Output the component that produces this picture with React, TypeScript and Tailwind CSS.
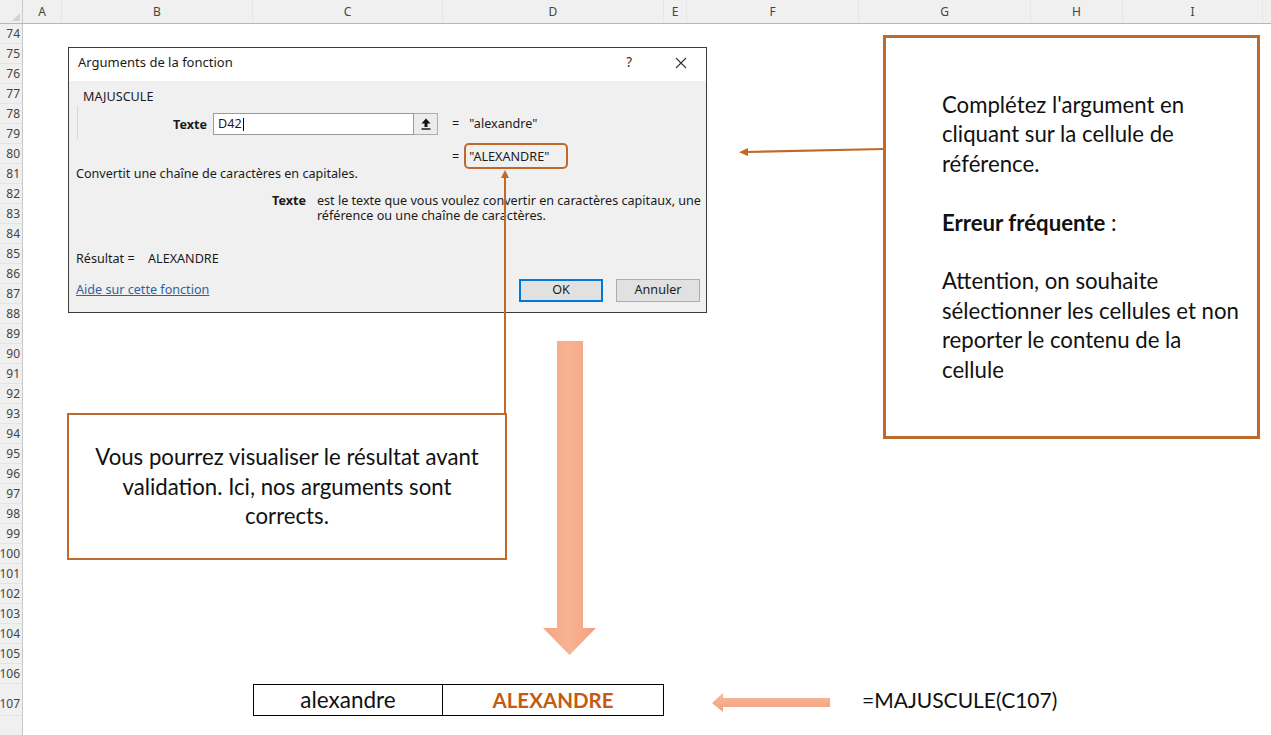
import React from "react";

const cols: { label: string; w: number }[] = [
  { label: "A", w: 39 },
  { label: "B", w: 191 },
  { label: "C", w: 190 },
  { label: "D", w: 221 },
  { label: "E", w: 23 },
  { label: "F", w: 172 },
  { label: "G", w: 172 },
  { label: "H", w: 92 },
  { label: "I", w: 140 },
];

const rows = Array.from({ length: 33 }, (_, i) => 74 + i);

function Dialog() {
  return (
    <div className="absolute left-[68px] top-[47px] w-[639px] h-[266px] border border-[#3c3c3c] bg-[#f0f0f0] text-[12.6px] text-[#1a1a1a] font-['Segoe_UI','Noto_Sans',sans-serif] flex flex-col">
      <div className="h-[33px] bg-white flex items-start pt-[6px] pl-[9px] pr-[19px] shrink-0">
        <span className="text-[13px] leading-[17px]">Arguments de la fonction</span>
        <span className="ml-auto text-[13.5px] leading-[17px] text-[#333]">?</span>
        <svg className="ml-[43px] mt-[3px]" width="12" height="12" viewBox="0 0 12 12">
          <path d="M1 1 L11 11 M11 1 L1 11" stroke="#333" strokeWidth="1.1" />
        </svg>
      </div>
      <div className="pl-[14px] mt-[8px] leading-[15px]">MAJUSCULE</div>
      <div className="ml-[8px] mt-[2px] border-l border-[#d8d8d8] pt-[7px] pb-[4px] flex items-center">
        <div className="w-[129px] text-right font-bold leading-[15px]">Texte</div>
        <div className="ml-[6px] w-[201px] h-[22px] bg-white border border-[#9a9a9a] flex items-center pl-[4px]">
          D42<span className="w-px h-[13px] bg-black ml-[1px]" />
        </div>
        <div className="w-[24px] h-[22px] bg-[#ececec] border border-[#adadad] border-l-0 flex items-center justify-center">
          <svg width="10" height="12" viewBox="0 0 10 12">
            <path d="M5 0.5 L9.5 5.5 L6.5 5.5 L6.5 9 L3.5 9 L3.5 5.5 L0.5 5.5 Z" fill="#111" />
            <rect x="0.5" y="10.3" width="9" height="1.4" fill="#111" />
          </svg>
        </div>
        <span className="ml-[14px]">=</span>
        <span className="ml-[10px]">"alexandre"</span>
      </div>
      <div className="mt-[10px] pl-[383px] leading-[15px] flex">
        <span>=</span>
        <span className="ml-[10px]">"ALEXANDRE"</span>
      </div>
      <div className="mt-[2px] pl-[7px] leading-[16px]">Convertit une chaîne de caractères en capitales.</div>
      <div className="mt-[11px] pl-[203px] flex leading-[15px]">
        <span className="font-bold">Texte</span>
        <span className="ml-[11px]">
          est le texte que vous voulez convertir en caractères capitaux, une
          <br />
          référence ou une chaîne de caractères.
        </span>
      </div>
      <div className="mt-[28px] pl-[7px] flex leading-[15px]">
        <span className="w-[72px]">Résultat =</span>
        <span>ALEXANDRE</span>
      </div>
      <div className="mt-[13px] pl-[7px] pr-[6px] flex items-center">
        <span className="text-[#2f6399] underline">Aide sur cette fonction</span>
        <div className="ml-auto w-[84px] h-[23px] bg-[#e1e1e1] border-2 border-[#0078d7] flex items-center justify-center">
          OK
        </div>
        <div className="ml-[13px] w-[84px] h-[23px] bg-[#e1e1e1] border border-[#adadad] flex items-center justify-center">
          Annuler
        </div>
      </div>
    </div>
  );
}

export default function App() {
  return (
    <div className="relative w-[1271px] h-[735px] overflow-hidden bg-white font-['Lato','Noto_Sans',sans-serif]">
      {/* Column header */}
      <div className="flex h-[24px] bg-[#f0f0f0] border-b border-[#b8b8b8] font-['Segoe_UI','Noto_Sans',sans-serif] text-[12px] text-[#444]">
        <div className="w-[23px] shrink-0 border-r border-[#c8c8c8] relative flex items-end justify-end pr-[2px] pb-[2px]">
          <svg width="8" height="8" viewBox="0 0 8 8">
            <path d="M8 0 L8 8 L0 8 Z" fill="#d2d2d2" />
          </svg>
        </div>
        {cols.map((c) => (
          <div
            key={c.label}
            style={{ width: c.w }}
            className="shrink-0 flex items-center justify-center border-r border-[#e6e6e6]"
          >
            {c.label}
          </div>
        ))}
        <div className="flex-1" />
      </div>

      <div className="flex">
        {/* Row header */}
        <div className="w-[23px] shrink-0 bg-[#f0f0f0] border-r border-[#c8c8c8] font-['Segoe_UI','Noto_Sans',sans-serif] text-[12px] text-[#444] flex flex-col h-[711px]">
          {rows.map((r) => (
            <div key={r} className="h-[20px] border-b border-[#e4e4e4] flex items-center justify-end pr-[2px] leading-none">
              {r}
            </div>
          ))}
          <div className="h-[32px] border-b border-[#e4e4e4] flex items-end justify-end pr-[2px] pb-[5px] leading-none">107</div>
        </div>

        {/* Sheet */}
        <div className="flex-1 flex flex-col">
          <div className="h-[660px]" />
          <div className="h-[32px] flex items-stretch">
            <div className="ml-[230px] w-[190px] border border-black flex items-center justify-center text-[22.5px] text-[#111]">
              alexandre
            </div>
            <div className="w-[221px] border-y border-r border-black flex items-center justify-center font-bold text-[20.5px] text-[#c55a11]">
              ALEXANDRE
            </div>
            <div className="ml-[198px] flex items-center text-[21px] text-[#111]">=MAJUSCULE(C107)</div>
          </div>
        </div>
      </div>

      <Dialog />

      {/* Orange highlight around result */}
      <div className="absolute left-[464px] top-[143px] w-[104px] h-[26px] rounded-[5px] border-2 border-[#c0692b]" />

      {/* Vertical connector with arrow up */}
      <svg className="absolute left-[499px] top-[168px]" width="12" height="248" viewBox="0 0 12 248">
        <path d="M6 6 L6 246" stroke="#c0692b" strokeWidth="2" />
        <path d="M6 2 L10 10 L2 10 Z" fill="#c0692b" />
      </svg>

      {/* Left callout */}
      <div className="absolute left-[67px] top-[413px] w-[440px] h-[147px] border-2 border-[#bd6a2e] bg-white flex items-center justify-center text-center text-[22.2px] leading-[29.5px] text-[#111]">
        <div>
          Vous pourrez visualiser le résultat avant
          <br />
          validation. Ici, nos arguments sont
          <br />
          corrects.
        </div>
      </div>

      {/* Right callout */}
      <div className="absolute left-[883px] top-[35px] w-[377px] h-[404px] border-[3px] border-[#bd6a2e] bg-white pl-[56px] pt-[52px] text-[22.2px] leading-[29.4px] text-[#111]">
        <div>Complétez l'argument en</div>
        <div>cliquant sur la cellule de</div>
        <div>référence.</div>
        <div>&nbsp;</div>
        <div>
          <span className="font-bold">Erreur fréquente</span> :
        </div>
        <div>&nbsp;</div>
        <div>Attention, on souhaite</div>
        <div>sélectionner les cellules et non</div>
        <div>reporter le contenu de la</div>
        <div>cellule</div>
      </div>

      {/* Horizontal connector arrow */}
      <svg className="absolute left-[736px] top-[142px]" width="150" height="16" viewBox="0 0 150 16">
        <path d="M148 7 L10 10" stroke="#c0692b" strokeWidth="2.2" />
        <path d="M3 10.2 L12 6 L12 14 Z" fill="#c0692b" />
      </svg>

      {/* Big down arrow */}
      <svg className="absolute left-[540px] top-[338px]" width="60" height="320" viewBox="0 0 60 320">
        <defs>
          <linearGradient id="gd" x1="0" y1="0" x2="1" y2="0">
            <stop offset="0" stopColor="#f5a586" />
            <stop offset="0.5" stopColor="#f8b393" />
            <stop offset="1" stopColor="#f29f80" />
          </linearGradient>
        </defs>
        <path d="M17 3 L43 3 L43 290 L56 290 L29.5 317 L3 290 L17 290 Z" fill="url(#gd)" />
      </svg>

      {/* Small left arrow */}
      <svg className="absolute left-[708px] top-[690px]" width="126" height="26" viewBox="0 0 126 26">
        <defs>
          <linearGradient id="gl" x1="0" y1="0" x2="0" y2="1">
            <stop offset="0" stopColor="#f9b99b" />
            <stop offset="1" stopColor="#f3a080" />
          </linearGradient>
        </defs>
        <path d="M4 13 L15 3 L15 8 L122 8 L122 17 L15 17 L15 22 Z" fill="url(#gl)" />
      </svg>
    </div>
  );
}
